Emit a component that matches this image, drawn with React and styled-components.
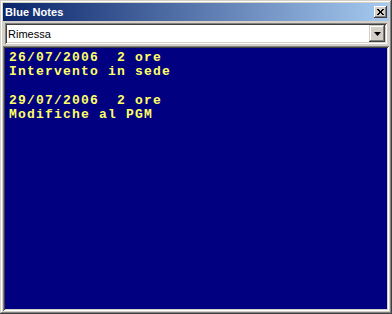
import React from "react";
import styled, { createGlobalStyle } from "styled-components";

const Global = createGlobalStyle`
  html, body { margin: 0; padding: 0; background: #d4d0c8; }
  #root { width: 392px; height: 314px; }
`;

const Window = styled.div`
  box-sizing: border-box;
  width: 392px;
  height: 314px;
  background: #d4d0c8;
  padding: 3px;
  display: flex;
  flex-direction: column;
  box-shadow: inset -1px -1px #404040, inset 1px 1px #d4d0c8,
    inset -2px -2px #808080, inset 2px 2px #ffffff;
  font-family: "Liberation Sans", Arial, sans-serif;
`;

const TitleBar = styled.div`
  height: 18px;
  display: flex;
  align-items: center;
  justify-content: space-between;
  padding: 0 2px 0 2px;
  background: linear-gradient(to right, #0a246a, #a6caf0);
`;

const Title = styled.span`
  color: #ffffff;
  font-weight: bold;
  font-size: 11px;
  letter-spacing: 0.1px;
`;

const CloseButton = styled.div`
  box-sizing: border-box;
  width: 13px;
  height: 12px;
  background: #d4d0c8;
  display: flex;
  align-items: center;
  justify-content: center;
  box-shadow: inset -1px -1px #404040, inset 1px 1px #ffffff,
    inset -2px -2px #808080;
`;

const ComboRow = styled.div`
  margin: 2px 2px 0 2px;
  height: 21px;
  box-sizing: border-box;
  display: flex;
  background: #ffffff;
  box-shadow: inset 1px 1px #808080, inset -1px -1px #ffffff,
    inset 2px 2px #404040, inset -2px -2px #d4d0c8;
  padding: 2px;
`;

const ComboText = styled.div`
  flex: 1;
  font-size: 11px;
  color: #000000;
  display: flex;
  align-items: center;
  padding-left: 1px;
`;

const DropButton = styled.div`
  box-sizing: border-box;
  width: 16px;
  height: 17px;
  background: #d4d0c8;
  display: flex;
  align-items: center;
  justify-content: center;
  box-shadow: inset -1px -1px #404040, inset 1px 1px #d4d0c8,
    inset -2px -2px #808080, inset 2px 2px #ffffff;
`;

const NotesArea = styled.div`
  flex: 1;
  margin-top: 2px;
  box-sizing: border-box;
  background: #000080;
  box-shadow: inset 1px 1px #808080, inset -1px -1px #ffffff,
    inset 2px 2px #404040, inset -2px -2px #d4d0c8;
  padding: 5px 4px 4px 6px;
  font-family: "Liberation Mono", "Courier New", monospace;
  font-weight: bold;
  font-size: 13px;
  letter-spacing: 1.2px;
  line-height: 14.3px;
  color: #ffff66;
  white-space: pre;
`;

const Line = styled.div`
  height: 14.3px;
`;

const notes = [
  "26/07/2006  2 ore",
  "Intervento in sede",
  "",
  "29/07/2006  2 ore",
  "Modifiche al PGM",
];

export default function App() {
  return (
    <>
      <Global />
      <Window>
        <TitleBar>
          <Title>Blue Notes</Title>
          <CloseButton>
            <svg width="7" height="6" viewBox="0 0 7 6">
              <path d="M0 0 L6 6 M1 0 L7 6 M6 0 L0 6 M7 0 L1 6" stroke="#000" strokeWidth="1" />
            </svg>
          </CloseButton>
        </TitleBar>
        <ComboRow>
          <ComboText>Rimessa</ComboText>
          <DropButton>
            <svg width="7" height="4" viewBox="0 0 7 4">
              <path d="M0 0 H7 L3.5 4 Z" fill="#000" />
            </svg>
          </DropButton>
        </ComboRow>
        <NotesArea>
          {notes.map((t, i) => (
            <Line key={i}>{t}</Line>
          ))}
        </NotesArea>
      </Window>
    </>
  );
}
